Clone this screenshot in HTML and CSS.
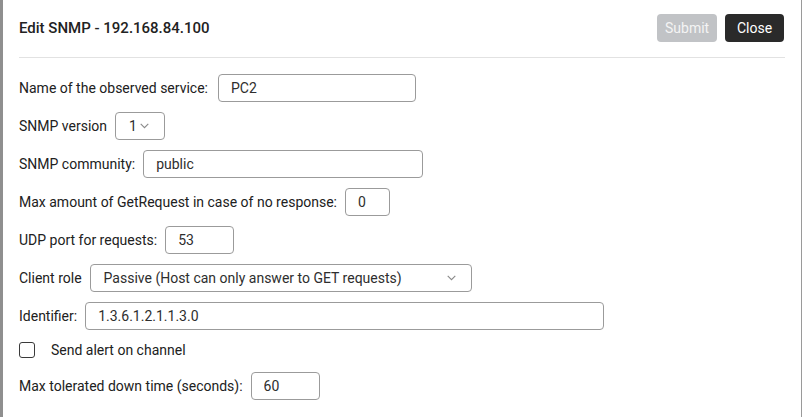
FILE: index.html
```html
<!DOCTYPE html>
<html>
<head>
<meta charset="utf-8">
<link rel="stylesheet" href="styles.css">
</head>
<body>
<div class="backdrop">
  <div class="modal">
    <div class="modal-header">
      <h5 class="title">Edit SNMP - 192.168.84.100</h5>
      <div class="actions">
        <button class="btn btn-submit" disabled>Submit</button>
        <button class="btn btn-close">Close</button>
      </div>
    </div>
    <div class="modal-body">
      <div class="row">
        <label class="lbl">Name of the observed service:</label>
        <input class="field w-name" value="PC2">
      </div>
      <div class="row">
        <label class="lbl">SNMP version</label>
        <div class="select w-version">
          <span>1</span>
          <svg class="chev" width="9" height="6" viewBox="0 0 9 6"><path d="M0.7 0.8 L4.5 4.6 L8.3 0.8" fill="none" stroke="#8a8a8a" stroke-width="1.1"/></svg>
        </div>
      </div>
      <div class="row">
        <label class="lbl">SNMP community:</label>
        <input class="field w-community" value="public">
      </div>
      <div class="row">
        <label class="lbl">Max amount of GetRequest in case of no response:</label>
        <input class="field w-max" value="0">
      </div>
      <div class="row">
        <label class="lbl">UDP port for requests:</label>
        <input class="field w-udp" value="53">
      </div>
      <div class="row">
        <label class="lbl">Client role</label>
        <div class="select w-role">
          <span>Passive (Host can only answer to GET requests)</span>
          <svg class="chev" width="9" height="6" viewBox="0 0 9 6"><path d="M0.7 0.8 L4.5 4.6 L8.3 0.8" fill="none" stroke="#8a8a8a" stroke-width="1.1"/></svg>
        </div>
      </div>
      <div class="row">
        <label class="lbl">Identifier:</label>
        <input class="field w-ident" value="1.3.6.1.2.1.1.3.0">
      </div>
      <div class="row row-check">
        <span class="checkbox"></span>
        <label class="lbl-check">Send alert on channel</label>
      </div>
      <div class="row">
        <label class="lbl">Max tolerated down time (seconds):</label>
        <input class="field w-down" value="60">
      </div>
    </div>
  </div>
</div>
</body>
</html>
```

FILE: styles.css
```css
html, body {
  margin: 0;
  padding: 0;
  height: 100%;
}
body {
  background: #8f8f8f;
  font-family: Roboto, "Liberation Sans", Arial, sans-serif;
  color: #212121;
  overflow: hidden;
}
.backdrop {
  height: 100%;
  padding-left: 3px;
  display: flex;
}
.modal {
  width: 766px;
  height: 100%;
  background: #ffffff;
  border-right: 1px solid #9a9a9a;
  padding: 0 16px;
}
.modal-header {
  display: flex;
  align-items: center;
  justify-content: space-between;
  padding: 14px 0 15px 0;
  border-bottom: 1px solid #e2e2e2;
}
.title {
  margin: 0;
  font-size: 15px;
  font-weight: 500;
  color: #222222;
  line-height: 20px;
}
.actions {
  display: flex;
  gap: 8px;
  margin-right: 1px;
}
.btn {
  height: 28px;
  padding: 0 8px;
  border: none;
  border-radius: 4px;
  font-family: Roboto, "Liberation Sans", Arial, sans-serif;
  font-size: 14px;
  color: #ffffff;
  line-height: 28px;
}
.btn-submit {
  background: #c1c3c6;
  color: #f4f4f4;
  width: 60px;
}
.btn-close {
  background: #2a2a2a;
  width: 59px;
}
.modal-body {
  padding-top: 16px;
}
.row {
  display: flex;
  align-items: center;
  height: 28px;
  margin-bottom: 10px;
  font-size: 14px;
}
.lbl {
  margin-right: 8px;
  white-space: nowrap;
}
.field {
  box-sizing: border-box;
  height: 28px;
  border: 1px solid #9b9b9b;
  border-radius: 4px;
  padding: 0 12px;
  font-family: Roboto, "Liberation Sans", Arial, sans-serif;
  font-size: 14px;
  color: #2e2e2e;
  background: #fff;
  outline: none;
}
.select {
  box-sizing: border-box;
  height: 28px;
  border: 1px solid #9b9b9b;
  border-radius: 4px;
  display: flex;
  align-items: center;
  justify-content: space-between;
  padding: 0 15px 0 13px;
  color: #2e2e2e;
}
.chev {
  display: block;
}
.w-name { width: 198px; margin-left: 2px; }
.w-version { width: 50px; }
.w-community { width: 280px; }
.w-max { width: 45px; }
.w-udp { width: 69px; }
.w-role { width: 382px; }
.w-ident { width: 519px; }
.w-down { width: 69px; }
.row-check {
  height: 22px;
  margin-bottom: 10px;
}
.checkbox {
  box-sizing: border-box;
  width: 16px;
  height: 16px;
  border: 1px solid #3a3a3a;
  border-radius: 3px;
  margin-right: 16px;
  margin-top: -3px;
}
.lbl-check {
  white-space: nowrap;
  margin-top: -3px;
}
```
